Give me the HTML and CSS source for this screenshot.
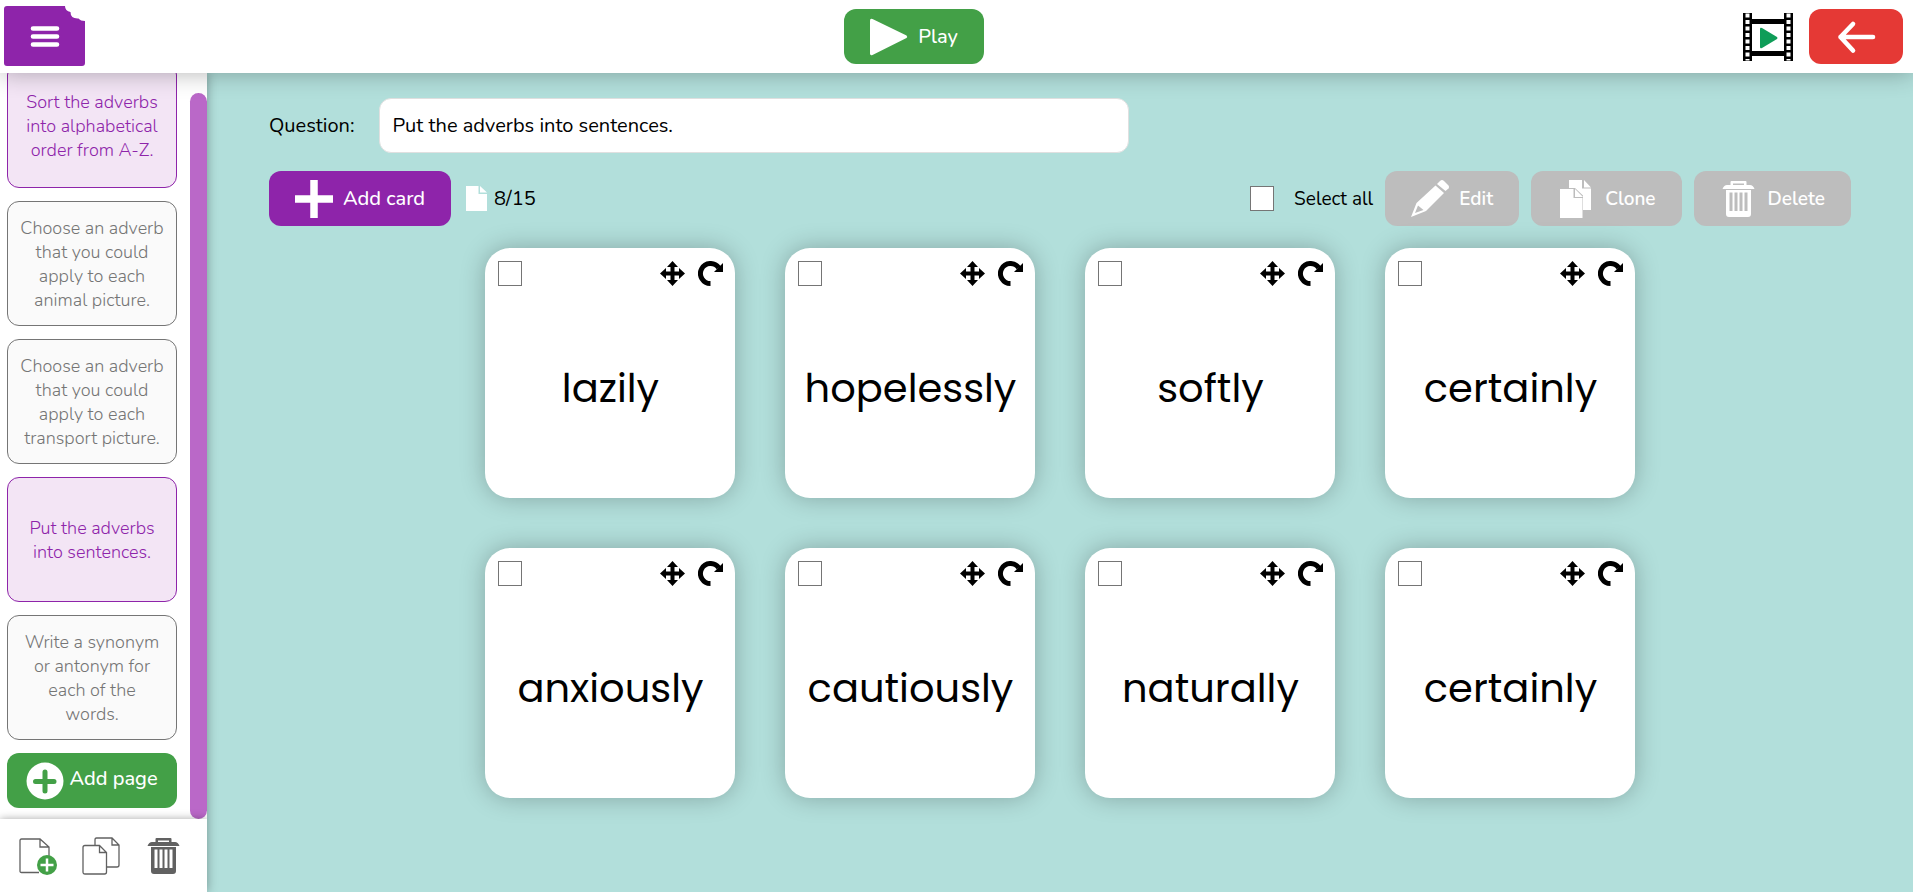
FILE: index.html
```
<!DOCTYPE html>
<html lang="en">
<head>
<meta charset="utf-8">
<title>Put the adverbs into sentences.</title>
<link rel="stylesheet" href="styles.css">
</head>
<body>

<!-- Shared icons -->
<svg class="sprite" aria-hidden="true">
  <symbol id="i-move" viewBox="0 0 25 25">
    <path d="M12.5 0l5.5 6h-3.500v4.500h4.500V7l6 5.500-6 5.500v-3.500h-4.500V19H18l-5.500 6L7 19h3.500v-4.500H6V18L0 12.500 6 7v3.500h4.500V6H7z"/>
  </symbol>
  <symbol id="i-rotate" viewBox="0 0 25 25">
    <path d="M12.5 22.5a10 10 0 1 1 8.2-15.7" fill="none" stroke="#000" stroke-width="5"/>
    <path d="M25 2v9h-9z"/>
  </symbol>
  <symbol id="i-trash" viewBox="0 0 38 38">
    <path d="M11.5 1h14a1 1 0 0 1 1 1v3h3.5q3 0 4.5 4h-32q1.5-4 4.5-4h3.5V2a1 1 0 0 1 1-1zm1.5 2.5V5h11V3.5z"/>
    <path fill-rule="evenodd" d="M6 10h25v24q0 3-3 3H9q-3 0-3-3zM9.5 12.5V31h3V12.5zm5 0V31h3V12.5zm5 0V31h3V12.5zm5 0V31h3V12.5z"/>
  </symbol>
</svg>

<header class="topbar">
  <button type="button" class="menu" aria-label="Menu">
    <svg width="81" height="61" viewBox="0 0 81 61">
      <path fill="#8e24aa" d="M3 0h58q0 5 5.5 6 0 7 8 6.5 2 2.5 6.5 2.5v42q0 3-3 3H3q-3 0-3-3V3q0-3 3-3z"/>
      <path d="M29 22.5h24M29 30.5h24M29 38.5h24" stroke="#fff" stroke-width="4.6" stroke-linecap="round"/>
    </svg>
  </button>

  <button type="button" class="btn green">
    <svg width="38" height="38" viewBox="0 0 38 38"><path d="M0 2.500Q0 0 2.500 1L36.500 17.500Q38 19 36.500 20L2.500 37Q0 38 0 35.500z" fill="#fff"/></svg>
    <span>Play</span>
  </button>

  <div class="topbar-right">
    <button type="button" class="film" aria-label="Play video">
      <svg width="50" height="48" viewBox="0 0 50 48">
        <path d="M0 0h9v6h32V0h9v48h-9v-5H9v5H0z"/>
        <path d="M9 11h32v27H9z" fill="#fff"/>
        <path d="M4.5 .5v47M45.5 .5v47" stroke="#fff" stroke-width="4" stroke-dasharray="4 2.5"/>
        <path d="M17 16q0-2 2-1l15 9q1 1 0 2L19 35q-2 1-2-1z" fill="#0f9d58"/>
      </svg>
    </button>
    <button type="button" class="btn red" aria-label="Back">
      <svg width="42" height="38" viewBox="0 0 42 38"><path d="M38 19H5.5M18 6L5.5 19 18 32.5" fill="none" stroke="#fff" stroke-width="4.6" stroke-linecap="round" stroke-linejoin="round"/></svg>
    </button>
  </div>
</header>

<div class="layout">
  <!-- Pages -->
  <aside class="sidebar">
    <div class="pages">
      <div class="page-list">
        <button type="button" class="page active">Sort the adverbs into alphabetical order from A-Z.</button>
        <button type="button" class="page">Choose an adverb that you could apply to each animal picture.</button>
        <button type="button" class="page">Choose an adverb that you could apply to each transport picture.</button>
        <button type="button" class="page active">Put the adverbs into sentences.</button>
        <button type="button" class="page">Write a synonym or antonym for each of the words.</button>
        <button type="button" class="btn green add-page">
          <svg width="38" height="38" viewBox="0 0 38 38"><circle cx="19" cy="19" r="18.5" fill="#fff"/><path d="M19 10v19M9.5 19.5h18.5" stroke="#43a047" stroke-width="5" stroke-linecap="round"/></svg>
          <span>Add page</span>
        </button>
      </div>
      <div class="scroll"></div>
    </div>
    <div class="page-tools">
      <button type="button" aria-label="New page">
        <svg width="38" height="38" viewBox="0 0 38 38">
          <path d="M20 35.5H2.5q-1.5 0-1.5-1.5V3.5Q1 2 2.5 2H21l9 8v10M21 2v8h9" fill="none" stroke="#616161" stroke-width="1.3"/>
          <circle cx="28" cy="28" r="10" fill="#43a047"/>
          <path d="M28 21.5v13M21.5 28h13" stroke="#fff" stroke-width="2.5"/>
        </svg>
      </button>
      <button type="button" aria-label="Copy page">
        <svg width="38" height="38" viewBox="0 0 38 38" fill="#fff" stroke="#616161" stroke-width="1.3">
          <path d="M14.5 1H30l7 7v20q0 2-2 2H15q-2 0-2-2V3q0-2 1.5-2zM30 1v7h7"/>
          <path d="M3 8.5h14.5l7 7V35q0 2-2 2H3q-2 0-2-2V10.5q0-2 2-2zM17.5 8.5v7h7"/>
        </svg>
      </button>
      <button type="button" aria-label="Delete page">
        <svg width="38" height="38" fill="#616161"><use href="#i-trash"/></svg>
      </button>
    </div>
  </aside>

  <main class="main">
    <div class="question">
      <label for="question">Question:</label>
      <input type="text" id="question" value="Put the adverbs into sentences.">
    </div>

    <div class="toolbar">
      <button type="button" class="btn purple">
        <svg width="38" height="38" viewBox="0 0 38 38"><path d="M19 0v38M0 19h38" stroke="#fff" stroke-width="7.5"/></svg>
        <span>Add card</span>
      </button>
      <div class="count">
        <svg width="21" height="25" viewBox="0 0 21 25" fill="#fff"><path d="M0 0h12.5v8H21v17H0z"/><path d="M14 0l7 6.5h-7z"/></svg>
        <span>8/15</span>
      </div>
      <label class="select-all"><input type="checkbox" class="check"> Select all</label>
      <button type="button" class="btn grey">
        <svg width="38" height="38" viewBox="0 0 38 38" fill="#fff">
          <path d="M26 4l3-3q2-2 4 0l4.5 4.5q1 1.5 0 3L34.5 11z"/>
          <path fill-rule="evenodd" d="M24.5 5.5l8.5 7.5L15 31 0 37 5.5 23zM7 25.5L4 33l8.5-3z"/>
        </svg>
        <span>Edit</span>
      </button>
      <button type="button" class="btn grey">
        <svg width="38" height="38" viewBox="0 0 38 38" fill="#fff">
          <path d="M12 0h13v8.5h9V30h-8V15.5L18 8h-6zM27 0l7 7.5h-7z"/>
          <path d="M3 9h13.5v9H25.500v20H3zM18 9l8 8h-8z"/>
        </svg>
        <span>Clone</span>
      </button>
      <button type="button" class="btn grey">
        <svg width="38" height="38" fill="#fff"><use href="#i-trash"/></svg>
        <span>Delete</span>
      </button>
    </div>

    <!-- Cards -->
    <div class="cards">
      <div class="card">
        <div class="card-top">
          <input type="checkbox" class="check" aria-label="Select lazily">
          <button type="button" aria-label="Move"><svg width="25" height="25"><use href="#i-move"/></svg></button>
          <button type="button" aria-label="Rotate"><svg width="25" height="25"><use href="#i-rotate"/></svg></button>
        </div>
        <p>lazily</p>
      </div>
      <div class="card">
        <div class="card-top">
          <input type="checkbox" class="check" aria-label="Select hopelessly">
          <button type="button" aria-label="Move"><svg width="25" height="25"><use href="#i-move"/></svg></button>
          <button type="button" aria-label="Rotate"><svg width="25" height="25"><use href="#i-rotate"/></svg></button>
        </div>
        <p>hopelessly</p>
      </div>
      <div class="card">
        <div class="card-top">
          <input type="checkbox" class="check" aria-label="Select softly">
          <button type="button" aria-label="Move"><svg width="25" height="25"><use href="#i-move"/></svg></button>
          <button type="button" aria-label="Rotate"><svg width="25" height="25"><use href="#i-rotate"/></svg></button>
        </div>
        <p>softly</p>
      </div>
      <div class="card">
        <div class="card-top">
          <input type="checkbox" class="check" aria-label="Select certainly">
          <button type="button" aria-label="Move"><svg width="25" height="25"><use href="#i-move"/></svg></button>
          <button type="button" aria-label="Rotate"><svg width="25" height="25"><use href="#i-rotate"/></svg></button>
        </div>
        <p>certainly</p>
      </div>
      <div class="card">
        <div class="card-top">
          <input type="checkbox" class="check" aria-label="Select anxiously">
          <button type="button" aria-label="Move"><svg width="25" height="25"><use href="#i-move"/></svg></button>
          <button type="button" aria-label="Rotate"><svg width="25" height="25"><use href="#i-rotate"/></svg></button>
        </div>
        <p>anxiously</p>
      </div>
      <div class="card">
        <div class="card-top">
          <input type="checkbox" class="check" aria-label="Select cautiously">
          <button type="button" aria-label="Move"><svg width="25" height="25"><use href="#i-move"/></svg></button>
          <button type="button" aria-label="Rotate"><svg width="25" height="25"><use href="#i-rotate"/></svg></button>
        </div>
        <p>cautiously</p>
      </div>
      <div class="card">
        <div class="card-top">
          <input type="checkbox" class="check" aria-label="Select naturally">
          <button type="button" aria-label="Move"><svg width="25" height="25"><use href="#i-move"/></svg></button>
          <button type="button" aria-label="Rotate"><svg width="25" height="25"><use href="#i-rotate"/></svg></button>
        </div>
        <p>naturally</p>
      </div>
      <div class="card">
        <div class="card-top">
          <input type="checkbox" class="check" aria-label="Select certainly">
          <button type="button" aria-label="Move"><svg width="25" height="25"><use href="#i-move"/></svg></button>
          <button type="button" aria-label="Rotate"><svg width="25" height="25"><use href="#i-rotate"/></svg></button>
        </div>
        <p>certainly</p>
      </div>
    </div>
  </main>
</div>
</body>
</html>
```
FILE: styles.css
```
:root{--purple:#8e24aa;--green:#43a047;--red:#e53935;--grey:#bdbdbd;--bg:#b2dfdb;}
*{margin:0;padding:0;box-sizing:border-box;}
body{height:100vh;display:flex;flex-direction:column;overflow:hidden;background:var(--bg);color:#000;font-family:Nunito,"Open Sans",sans-serif;font-size:20px;}
button{border:none;background:none;cursor:pointer;font:inherit;color:inherit;}
svg{display:block;flex:none;}
.sprite{position:absolute;width:0;height:0;}

/* Top bar */
.topbar{display:flex;justify-content:space-between;align-items:center;height:73px;padding:0 10px 0 4px;background:#fff;box-shadow:0 0 25px rgba(0,0,0,.3);z-index:2;}
.topbar-right{display:flex;align-items:center;gap:16px;}

.btn{display:flex;align-items:center;justify-content:center;gap:10px;height:55px;padding:0 26px;border-radius:12px;color:#fff;font-weight:500;white-space:nowrap;}
.green{background:var(--green);}
.red{background:var(--red);}
.purple{background:var(--purple);}
.grey{background:var(--grey);font-size:19px;font-weight:600;}

.layout{flex:1;display:flex;min-height:0;}

/* Sidebar */
.sidebar{flex:none;width:207px;display:flex;flex-direction:column;background:#fff;box-shadow:0 0 10px rgba(0,0,0,.35);z-index:1;}
.pages{flex:1;display:flex;justify-content:space-between;min-height:0;}
.page-list{width:177px;display:flex;flex-direction:column;justify-content:flex-end;gap:13px;padding:0 0 11px 7px;overflow:hidden;}
.page{flex:none;height:125px;padding:0 12px;border:1px solid #757575;border-radius:12px;background:#fafafa;color:#757575;font-size:18px;font-weight:300;line-height:24px;}
.page.active{border-color:var(--purple);background:#f3e5f5;color:var(--purple);}
.add-page{flex:none;padding:0;gap:5px;}
.add-page span{padding-bottom:4px;}
.scroll{width:17px;margin-top:20px;border-radius:9px;background:#ba68c8;}
.page-tools{display:flex;align-items:center;gap:25px;height:73px;padding-left:19px;background:#fff;box-shadow:0 0 8px rgba(0,0,0,.35);clip-path:inset(-10px 0 0 0);}

/* Editor */
.main{flex:1;padding:25px 62px 0;}
.question{display:flex;align-items:center;gap:24px;}
.question input{flex:0 1 750px;height:55px;padding:0 13px;border:1px solid #e0e0e0;border-radius:12px;background:#fff;font:inherit;}
.toolbar{display:flex;align-items:center;gap:12px;margin:18px 0 22px;}
.count{display:flex;align-items:center;gap:7px;margin-left:3px;}
.select-all{display:flex;align-items:center;gap:20px;margin-left:auto;font-size:19px;}
.check{appearance:none;flex:none;width:24px;height:25px;border:1px solid #757575;background:#fff;}

.cards{display:grid;grid-template-columns:repeat(4,250px);justify-content:center;gap:50px;}
.card{display:flex;flex-direction:column;height:250px;padding:13px 12px 9px 13px;border-radius:25px;background:#fff;box-shadow:0 0 25px rgba(0,0,0,.25);}
.card-top{display:flex;gap:13px;}
.card-top .check{margin-right:auto;}
.card p{flex:1;display:flex;align-items:center;justify-content:center;font-family:Poppins,Inter,sans-serif;font-size:40px;}
```
